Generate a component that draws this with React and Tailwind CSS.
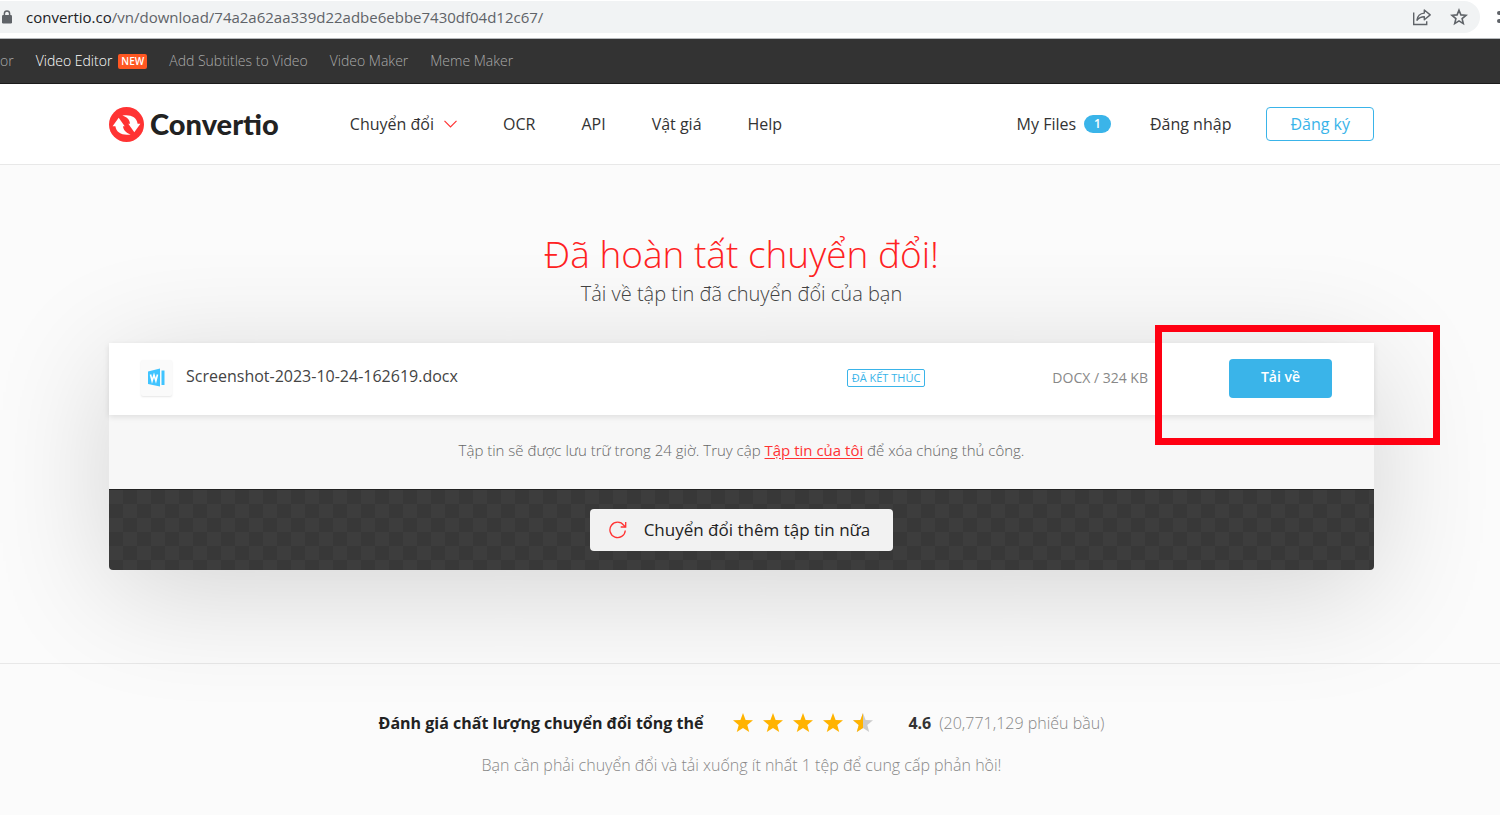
// src/pages/DownloadPage.jsx
const topLinks = ["Add Subtitles to Video", "Video Maker", "Meme Maker"];

const navLinks = ["OCR", "API", "Vật giá", "Help"];

const STAR =
  "M10 0l2.6 6.9 7.4.4-5.7 4.7 1.9 7.1L10 15.1l-6.2 4L5.7 12 0 7.3l7.4-.4z";

function LockIcon() {
  return (
    <svg width="10" height="14" viewBox="0 0 10 14" fill="none" aria-hidden="true">
      <path d="M2.4 6V3.6a2.6 2.6 0 0 1 5.2 0V6" stroke="#5f6368" strokeWidth="1.5" />
      <rect y="5" width="10" height="8.5" rx="1.2" fill="#5f6368" />
    </svg>
  );
}

function ShareIcon() {
  return (
    <svg width="20" height="18" viewBox="0 0 20 18" fill="none" stroke="#5f6368" strokeWidth="1.4" aria-hidden="true">
      <path d="M1.7 4.5v12h13v-3.2" />
      <path d="M5 12.2c.5-4.4 3-6.8 7.3-7.1V2l5.9 4.9-5.9 4.8V8.8c-3.2 0-5.4 1-7.3 3.4z" strokeLinejoin="round" />
    </svg>
  );
}

function BookmarkIcon() {
  return (
    <svg width="18" height="18" viewBox="0 0 18 18" fill="none" aria-hidden="true">
      <path d="M9 2.2l1.9 4.7 5.1.4-3.9 3.3 1.2 5L9 12.9l-4.3 2.7 1.2-5L2 7.3l5.1-.4z" stroke="#5f6368" strokeWidth="1.6" />
    </svg>
  );
}

function LogoMark() {
  return (
    <svg width="35" height="35" viewBox="0 0 35 35" aria-hidden="true">
      <circle cx="17.5" cy="17.5" r="17.5" fill="#ff3333" />
      <path
        d="M3.6 19.3L9.7 10.8l6 8.5h-1.7c.3 3.6 2.700 6.600 7.600 8.100-7.600 1.400-14.300-1.200-15.200-8.100z"
        fill="#fff"
      />
      <path
        d="M31.400 16.700l-6.100 8.500-6-8.500h1.700c-.3-3.600-2.700-6.600-7.600-8.100 7.600-1.400 14.300 1.200 15.200 8.100z"
        fill="#fff"
      />
    </svg>
  );
}

function WordIcon() {
  return (
    <svg width="17" height="20" viewBox="0 0 17 20" aria-hidden="true">
      <path d="M0 3.5L12 .5v18L0 16z" fill="#40c4ff" />
      <path d="M13.5 2.5h3V17h-3z" fill="#40c4ff" />
      <path d="M2.5 6.5l1.6 6.3L6 7l1.900 5.800 1.600-6.300" fill="none" stroke="#fff" strokeWidth="1.6" />
    </svg>
  );
}

function RefreshIcon() {
  return (
    <svg width="18" height="18" viewBox="0 0 18 18" fill="none" stroke="#ff3333" strokeWidth="1.3" aria-hidden="true">
      <path d="M16.3 9.5A7.7 7.7 0 1 1 14.8 4.3l1.5 1.7" />
      <path d="M16.7 1v5h-5" />
    </svg>
  );
}

function Star({ half }) {
  return (
    <svg width="20" height="20" viewBox="0 0 20 20" aria-hidden="true">
      <path d={STAR} fill={half ? "#cccccc" : "#ffb300"} />
      {half && (
        <path d="M10 0v15.1l-6.2 4L5.7 12 0 7.3l7.4-.4z" fill="#ffb300" />
      )}
    </svg>
  );
}

function AddressBar() {
  return (
    <div className="flex h-[39px] items-start border-b border-[#b5b8bb] bg-white pt-px">
      <div className="flex h-8 min-w-0 grow items-center rounded-r-full bg-[#f1f3f4] pr-3 pl-[2px]">
        <LockIcon />
        <p className="ml-[14px] grow truncate text-[15px] text-[#5f6368]">
          <span className="text-[#202124]">convertio.co</span>
          /vn/download/74a2a62aa339d22adbe6ebbe7430df04d12c67/
        </p>
        <div className="flex items-center gap-[18px]">
          <button type="button" aria-label="Share">
            <ShareIcon />
          </button>
          <button type="button" aria-label="Bookmark">
            <BookmarkIcon />
          </button>
        </div>
      </div>
      <div className="flex h-8 w-5 flex-col items-end justify-center gap-1 overflow-hidden">
        <span className="h-1 w-[3px] rounded-l-sm bg-[#5f6368]" />
        <span className="h-1 w-[3px] rounded-l-sm bg-[#5f6368]" />
      </div>
    </div>
  );
}

function TopBar() {
  return (
    <nav className="flex h-[45px] items-center gap-[22px] border-b border-[#1c1c1c] bg-[#333333] text-sm font-light text-[#aaaaaa]">
      <a href="#editor">or</a>
      <a href="#video-editor" className="flex items-center gap-[6px] text-white">
        Video Editor
        <span className="rounded-xs bg-[#ff5722] px-[3px] text-[10px] leading-[15px] font-semibold">
          NEW
        </span>
      </a>
      {topLinks.map((label) => (
        <a key={label} href="#tools">
          {label}
        </a>
      ))}
    </nav>
  );
}

function Header() {
  return (
    <header className="border-b border-[#e8e8e8] bg-white pr-[17px]">
      <div className="mx-auto flex h-20 max-w-[1265px] items-center text-base text-[#333333]">
        <a
          href="#home"
          className="flex items-center gap-[6px] font-['Lato',sans-serif] text-[29px] font-black text-[#222222]"
        >
          <LogoMark />
          Convertio
        </a>
        <nav className="ml-[71px] flex grow items-center gap-[46px]">
          <button type="button" className="flex items-center gap-[10px]">
            Chuyển đổi
            <svg width="13" height="8" viewBox="0 0 13 8" fill="none" stroke="#ff3333" strokeWidth="1.2" aria-hidden="true">
              <path d="M.5.8l6 6 6-6" />
            </svg>
          </button>
          {navLinks.map((label) => (
            <a key={label} href="#nav">
              {label}
            </a>
          ))}
        </nav>
        <a href="#files" className="flex items-center gap-2">
          My Files
          <span className="rounded-full bg-[#3ab4e9] px-[10px] text-xs leading-[18px] font-semibold text-white">
            1
          </span>
        </a>
        <a href="#login" className="ml-[39px]">
          Đăng nhập
        </a>
        <button
          type="button"
          className="ml-[35px] h-[34px] rounded-sm border border-[#3ab4e9] px-[23px] text-[#3ab4e9]"
        >
          Đăng ký
        </button>
      </div>
    </header>
  );
}

function FileCard() {
  return (
    <section className="relative mt-8 rounded-b-sm shadow-[0_20px_120px_rgba(0,0,0,0.16)]">
      <div className="relative flex h-[72px] items-center bg-white pr-[42px] pb-[2px] pl-8 shadow-[0_2px_6px_rgba(0,0,0,0.10)]">
        <span className="flex h-9 w-[31px] items-center justify-center rounded-xs bg-[#fafafa] shadow-[0_1px_2px_rgba(0,0,0,0.10)]">
          <WordIcon />
        </span>
        <span className="ml-[14px] grow pb-1 text-base text-[#444444]">
          Screenshot-2023-10-24-162619.docx
        </span>
        <span className="rounded-xs border border-[#3ab4e9] px-1 text-[11px] leading-4 text-[#3ab4e9]">
          ĐÃ KẾT THÚC
        </span>
        <span className="ml-[127px] text-sm text-[#888888]">DOCX / 324 KB</span>
        <button
          type="button"
          className="ml-[81px] h-[39px] w-[103px] rounded-sm bg-[#3ab4e9] pb-[2px] text-sm font-semibold text-white"
        >
          Tải về
        </button>
      </div>
      <p className="bg-[#f7f7f7] pt-[23px] pb-[26px] text-center text-[15px] leading-[25px] font-light text-[#666666]">
        Tập tin sẽ được lưu trữ trong 24 giờ. Truy cập{" "}
        <a href="#my-files" className="font-normal text-[#ff3333] underline underline-offset-2">
          Tập tin của tôi
        </a>{" "}
        để xóa chúng thủ công.
      </p>
      <div className="flex h-[81px] items-center justify-center rounded-b-sm border-t border-[#222222] bg-[repeating-conic-gradient(#383838_0%_25%,#3d3d3d_0%_50%)] bg-size-[28px_28px]">
        <button
          type="button"
          className="flex h-[42px] items-center gap-[17px] rounded-sm bg-[#f2f2f2] px-[19px] text-[17px] font-medium text-[#222222]"
        >
          <RefreshIcon />
          <span className="pr-1">Chuyển đổi thêm tập tin nữa</span>
        </button>
      </div>
      {/* highlight around the download button */}
      <div className="pointer-events-none absolute -top-[18px] -right-[66px] h-[120px] w-[285px] border-[7px] border-[#ff0012]" />
    </section>
  );
}

function Rating() {
  return (
    <section className="flex flex-col items-center gap-[18px] pt-[47px] pr-[17px] pb-9">
      <div className="flex items-center text-base leading-6">
        <h2 className="font-bold text-[#222222]">
          Đánh giá chất lượng chuyển đổi tổng thể
        </h2>
        <div className="ml-[30px] flex gap-[10px]" role="img" aria-label="4.6 / 5">
          <Star />
          <Star />
          <Star />
          <Star />
          <Star half />
        </div>
        <span className="ml-[35px] font-bold text-[#333333]">4.6</span>
        <span className="ml-2 font-light text-[#888888]">(20,771,129 phiếu bầu)</span>
      </div>
      <p className="text-base leading-6 font-light text-[#888888]">
        Bạn cần phải chuyển đổi và tải xuống ít nhất 1 tệp để cung cấp phản hồi!
      </p>
    </section>
  );
}

export default function App() {
  return (
    <div className="min-h-screen overflow-hidden bg-[#fbfbfb] font-['Open_Sans',sans-serif]">
      <AddressBar />
      <TopBar />
      <Header />
      <main className="border-b border-[#e8e8e8] pt-[66px] pr-[17px] pb-[93px]">
        <div className="mx-auto max-w-[1265px]">
          <h1 className="text-center text-[37px] leading-[46px] font-light text-[#ff2222]">
            Đã hoàn tất chuyển đổi!
          </h1>
          <p className="text-center text-xl leading-[34px] font-light text-[#444444]">
            Tải về tập tin đã chuyển đổi của bạn
          </p>
          <FileCard />
        </div>
      </main>
      <Rating />
    </div>
  );
}
